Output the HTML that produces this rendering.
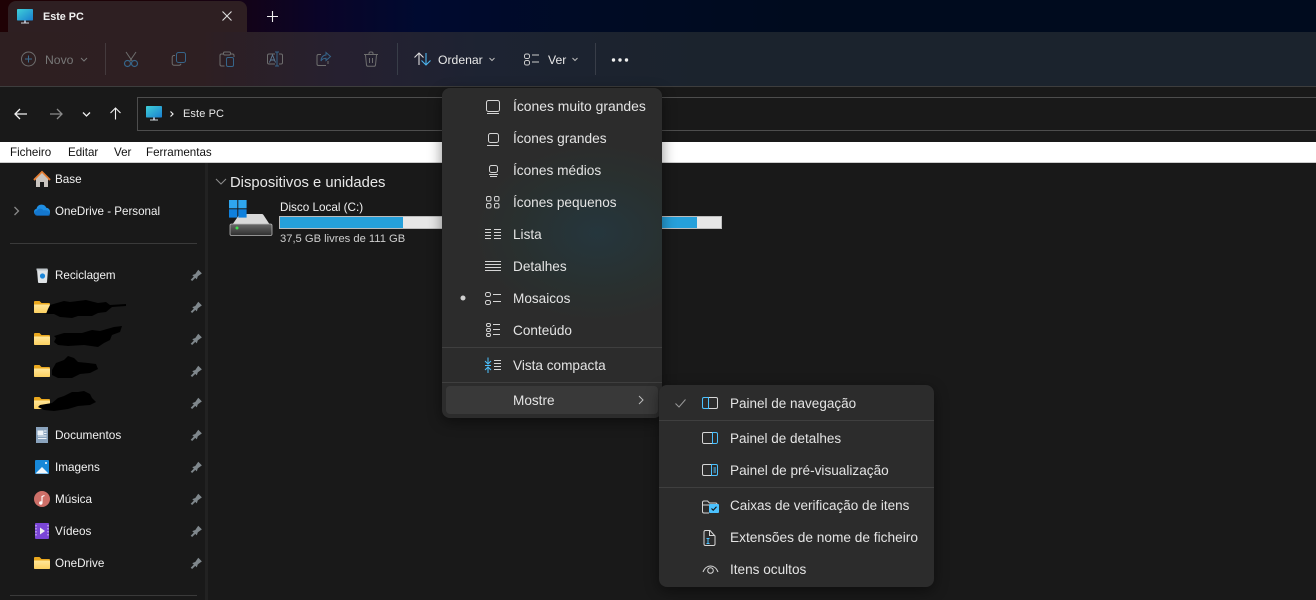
<!DOCTYPE html>
<html><head><meta charset="utf-8"><style>
html,body{margin:0;padding:0;background:#191919}
#r{position:relative;width:1316px;height:600px;overflow:hidden;background:#191919;font-family:"Liberation Sans",sans-serif;color:#f2f2f2}
.a{position:absolute}
.t{position:absolute;white-space:nowrap;line-height:16px;font-size:11.7px}
.m{position:absolute;white-space:nowrap;line-height:18px;font-size:13.6px;color:#e4e4e4}
svg{position:absolute;left:0;top:0}
</style></head><body><div id="r">
<div class="a" style="left:0;top:0;width:1316px;height:32px;background:linear-gradient(90deg,#1f0205 0,#1c0208 170px,#0a0428 320px,#000a30 420px,#000b24 600px,#000b1e 800px,#000b1e 100%)"></div>
<div class="a" style="left:0;top:32px;width:1316px;height:54px;background:linear-gradient(90deg,#2e1f21 0,#2e1f22 200px,#262030 340px,#1d2332 480px,#1b232d 700px,#1b232d 100%)"></div>
<div class="a" style="left:8px;top:1px;width:239px;height:31px;background:#2e1f22;border-radius:8px 8px 0 0"></div>
<div class="a" style="left:0;top:86px;width:1316px;height:1px;background:#3d3d3d"></div>
<div class="a" style="left:137px;top:97px;width:1180px;height:32px;border:1px solid #4d4d4d"></div>
<div class="a" style="left:0;top:142px;width:1316px;height:20px;background:#fff;border-bottom:1px solid #ccc"></div>
<div class="a" style="left:205px;top:163px;width:3px;height:437px;background:#222"></div>
<div class="a" style="left:10px;top:243px;width:187px;height:1px;background:#3a3a3a"></div>
<div class="a" style="left:10px;top:595px;width:187px;height:1px;background:#3a3a3a"></div>
<div class="a" style="left:105px;top:43px;width:1px;height:32px;background:#443a3d"></div>
<div class="a" style="left:397px;top:43px;width:1px;height:32px;background:#383d48"></div>
<div class="a" style="left:595px;top:43px;width:1px;height:32px;background:#383d48"></div>

<div class="t" style="left:43px;top:9px;font-weight:bold;font-size:10.8px;color:#f0f0f0">Este PC</div>
<div class="t" style="left:45px;top:52px;color:#777;font-size:12.2px">Novo</div>
<div class="t" style="left:438px;top:52px;font-size:12.2px;color:#e8e8e8">Ordenar</div>
<div class="t" style="left:548px;top:52px;font-size:12.2px;color:#e8e8e8">Ver</div>
<div class="t" style="left:183px;top:106px;color:#e8e8e8;font-size:11px;letter-spacing:.1px">Este PC</div>
<div class="t" style="left:10px;top:145px;color:#111;font-size:11.6px">Ficheiro</div>
<div class="t" style="left:68px;top:145px;color:#111;font-size:11.6px">Editar</div>
<div class="t" style="left:114px;top:145px;color:#111;font-size:11.6px">Ver</div>
<div class="t" style="left:146px;top:145px;color:#111;font-size:11.6px">Ferramentas</div>

<div class="t" style="left:55px;top:172px">Base</div>
<div class="t" style="left:55px;top:204px;font-size:11.6px">OneDrive - Personal</div>
<div class="t" style="left:55px;top:268px;font-size:11.6px">Reciclagem</div>
<div class="t" style="left:55px;top:427px;font-size:11.8px">Documentos</div>
<div class="t" style="left:55px;top:460px">Imagens</div>
<div class="t" style="left:55px;top:492px">Música</div>
<div class="t" style="left:55px;top:524px">Vídeos</div>
<div class="t" style="left:55px;top:556px">OneDrive</div>

<div class="t" style="left:230px;top:175px;font-size:14.8px;color:#e8e8e8">Dispositivos e unidades</div>
<div class="t" style="left:280px;top:200px;font-size:11.7px">Disco Local (C:)</div>
<div class="t" style="left:280px;top:231px;font-size:11.2px;color:#cfcfcf">37,5 GB livres de 111 GB</div>
<div class="a" style="left:279px;top:216px;width:441px;height:11px;border:1px solid #bcbcbc;background:#e6e6e6"></div>
<div class="a" style="left:280px;top:217px;width:123px;height:11px;background:#26a0da"></div>
<div class="a" style="left:640px;top:217px;width:57px;height:11px;background:#26a0da"></div>

<svg width="1316" height="600" fill="none">
<defs>
<linearGradient id="mon" x1="0" y1="0" x2="1" y2="1"><stop offset="0" stop-color="#3fd0d8"/><stop offset="1" stop-color="#1a7fd0"/></linearGradient>
<linearGradient id="fol" x1="0" y1="0" x2="0" y2="1"><stop offset="0" stop-color="#ffe69a"/><stop offset="1" stop-color="#fcd060"/></linearGradient>
<linearGradient id="drv" x1="0" y1="0" x2="0" y2="1"><stop offset="0" stop-color="#6a6a6a"/><stop offset="1" stop-color="#2e2e2e"/></linearGradient>
<g id="pin"><path transform="scale(1.2)" d="M1 9.800 3.600 7.200 2.300 5.900 4.800 5 7.300 1.500 10.300 4.500 6.900 7 6.100 9.500 4.800 8.200 2.200 10.800Z" fill="#7f878c"/></g>
<g id="folder"><path d="M0 2a1 1 0 0 1 1-1h4.500l2 2H15a1 1 0 0 1 1 1v8a1 1 0 0 1-1 1H1a1 1 0 0 1-1-1Z" fill="#eaa81e"/><path d="M0 4.500h15a1 1 0 0 1 1 1v6.500a1 1 0 0 1-1 1H1a1 1 0 0 1-1-1Z" fill="url(#fol)"/></g>
</defs>

<!-- tab icon -->
<rect x="17" y="9" width="16" height="11.500" rx=".8" fill="url(#mon)"/><rect x="24" y="20.500" width="2" height="2.500" fill="#aab"/><rect x="21" y="22.500" width="8" height="1" fill="#cfd6dc"/>
<path d="M222.500 11.500l9 9M231.500 11.500l-9 9" stroke="#ddd" stroke-width="1.100"/>
<path d="M272.500 11v11M267 16.500h11" stroke="#eee" stroke-width="1.100"/>

<!-- Novo -->
<circle cx="28.500" cy="59" r="7" stroke="#6e6e6e"/><path d="M28.500 55.500v7M25 59h7" stroke="#3d6d90"/>
<path d="M81 58l3 3 3-3" stroke="#777"/>
<!-- cut -->
<path d="M126 52l6.500 9.500M136 52l-6.500 9.500" stroke="#6e6e6e"/><circle cx="127.500" cy="63.500" r="3" stroke="#36658a" stroke-width="1.200"/><circle cx="134.500" cy="63.500" r="3" stroke="#36658a" stroke-width="1.200"/>
<!-- copy -->
<rect x="176.500" y="52.500" width="9" height="10" rx="2" stroke="#36658a"/><path d="M175 55.500h-1a1.800 1.800 0 0 0-1.800 1.800v6a2 2 0 0 0 2 2h5a2 2 0 0 0 1.800-1.500" stroke="#6e6e6e"/>
<!-- paste -->
<path d="M223 54h-1.500a1.500 1.500 0 0 0-1.500 1.500v9a1.500 1.500 0 0 0 1.500 1.500h3M231 54h1.500a1.500 1.500 0 0 1 1.500 1.500V57" stroke="#6e6e6e"/><rect x="223.500" y="52" width="7" height="3" rx="1.200" stroke="#6e6e6e"/><rect x="226.500" y="57.500" width="7" height="9" rx="1.500" stroke="#36658a"/>
<!-- rename -->
<path d="M275 54h-6a1.500 1.500 0 0 0-1.500 1.500v7a1.500 1.500 0 0 0 1.500 1.500h6M279 54h2a1.500 1.500 0 0 1 1.500 1.500v7a1.500 1.500 0 0 1-1.500 1.500h-2" stroke="#6e6e6e"/><path d="M277 52v14M275 52h4M275 66h4" stroke="#36658a"/><path d="M269.500 62.500l3-7.500 3 7.500M270.500 60h4" stroke="#5d7c94" stroke-width=".9"/>
<!-- share -->
<path d="M326 65.500h-7.500a1.500 1.500 0 0 1-1.500-1.500v-8a1.500 1.500 0 0 1 1.500-1.500H321M328 61v3" stroke="#6e6e6e"/><path d="M326 52.500l4.500 4-4.500 4v-2.300c-2.500 0-4 .8-5 2.800 0-3.500 2-5.800 5-6Z" stroke="#36658a"/>
<!-- delete -->
<path d="M364 54.500h14M369 54.500v-1a1.500 1.500 0 0 1 1.500-1.500h1a1.500 1.500 0 0 1 1.500 1.500v1M365.500 55l1 10a1.500 1.500 0 0 0 1.500 1.300h6a1.500 1.500 0 0 0 1.500-1.300l1-10M369.500 58v5M372.500 58v5" stroke="#6e6e6e"/>
<!-- sort -->
<path d="M419 65V53M414.500 57.500 419 53l4.500 4.500" stroke="#dcdcdc" stroke-width="1.100"/><path d="M426 53v12M421.500 60.500 426 65l4.500-4.500" stroke="#4cb4ee" stroke-width="1.100"/>
<path d="M489.500 58l2.500 2.500 2.500-2.500" stroke="#bbb"/>
<!-- ver -->
<rect x="524.500" y="54" width="5" height="4.500" rx="1.800" stroke="#ccc"/><rect x="524.500" y="60.500" width="5" height="4.500" rx="1.800" stroke="#ccc"/><path d="M532 55h7M532 62h7" stroke="#ccc" stroke-width="1.100"/>
<path d="M572.500 58l2.500 2.500 2.500-2.500" stroke="#bbb"/>
<circle cx="613.500" cy="60" r="1.700" fill="#eee"/><circle cx="620" cy="60" r="1.700" fill="#eee"/><circle cx="626.500" cy="60" r="1.700" fill="#eee"/>

<!-- nav -->
<path d="M15 114h12M20 109l-5 5 5 5" stroke="#f0f0f0" stroke-width="1.300"/>
<path d="M50 114h12M57 109l5 5-5 5" stroke="#8a8a8a" stroke-width="1.300"/>
<path d="M83 112.500l3.500 3.500 3.500-3.500" stroke="#eee" stroke-width="1.300"/>
<path d="M115.500 119.500V108M110.500 113l5-5 5 5" stroke="#f0f0f0" stroke-width="1.100"/>
<rect x="146" y="106" width="16" height="11.500" rx=".8" fill="url(#mon)"/><rect x="153" y="117.500" width="2" height="2.500" fill="#aab"/><rect x="150" y="119.500" width="8" height="1" fill="#cfd6dc"/>
<path d="M170.500 111.500l2.500 2.500-2.500 2.500" stroke="#eee" stroke-width="1.200"/>

<!-- sidebar icons -->
<path d="M34 180l8-8 8 8" stroke="#e57d32" stroke-width="2"/><path d="M36 179l6-6 6 6v8H44v-5h-4v5h-4Z" fill="#c9c4bf"/>
<path d="M14.500 207l4 4-4 4" stroke="#888" stroke-width="1.300"/>
<path d="M37 215a3.200 3.200 0 0 1-.5-6.300 5.200 5.200 0 0 1 9.800-1 4 4 0 0 1 3.700 4.500 2.800 2.800 0 0 1-2 2.800Z" fill="#1f8fe4"/><path d="M37 216a2.800 2.800 0 0 1 0-5.500c1.500-2.500 5-2.500 6.500 0 3-.8 6.500.8 6.500 3.500a2 2 0 0 1-2 2Z" fill="#0f6cc4" opacity=".7"/>
<path d="M37 269.500h11l-1 12.500a1 1 0 0 1-1 1h-7a1 1 0 0 1-1-1Z" fill="#dfe3e6"/><rect x="36.500" y="268.500" width="11" height="2" fill="#bfc5c9"/><circle cx="42.500" cy="276" r="2.600" fill="#1c86d8"/>
<use href="#folder" x="34" y="300"/><use href="#folder" x="34" y="332"/><use href="#folder" x="34" y="364"/><use href="#folder" x="34" y="396"/><use href="#folder" x="34" y="556"/>
<path d="M36 427h12v16H36Z" fill="#8aa3bd"/><path d="M38 431h5v3.500h-5ZM44 431h2.500M44 433.500h2.500M38 436h8.500M38 438.500h8.500" stroke="#eef3f8" fill="#eef3f8" stroke-width=".9"/>
<rect x="35" y="460" width="14" height="14" rx="1" fill="#1788d9"/><path d="M35.500 473.500l6.500-6.500 6.500 6.500Z" fill="#f4f8fc"/><circle cx="46" cy="463" r="1" fill="#fff"/>
<circle cx="42" cy="499" r="8" fill="#cd6f68"/><path d="M42 503v-6.500l2.500-1" stroke="#fff" stroke-width="1.100"/><circle cx="40.800" cy="503" r="1.700" fill="#fff"/>
<rect x="35" y="523" width="14" height="16" rx="1" fill="#7a45d6"/><path d="M40 527.500l5 3.500-5 3.500Z" fill="#eee"/><path d="M36 525v12M48 525v12" stroke="#c9b2f0" stroke-width="1.300" stroke-dasharray="1.500 1.500"/>

<use href="#pin" x="189.500" y="268"/><use href="#pin" x="189.500" y="300"/><use href="#pin" x="189.500" y="332"/><use href="#pin" x="189.500" y="364"/><use href="#pin" x="189.500" y="396"/><use href="#pin" x="189.500" y="428"/><use href="#pin" x="189.500" y="460"/><use href="#pin" x="189.500" y="492"/><use href="#pin" x="189.500" y="524"/><use href="#pin" x="189.500" y="556"/>

<!-- scribbles -->
<path d="M50 305l14-4 6 1 16-2 12 3 8-1 4 3 16-1v2l-14 1-6 5-8 1-6 3-14 0-6 2-12-1-6-3-8 0 2-5Z" fill="#000"/>
<path d="M54 336l10-3 18 0 10-3 8 1 14-4 8-1-2 6-8 3-2 5-6 3-6 4-14-2-16 1-10-1-4-3 2-4Z" fill="#000"/>
<path d="M52 370l4-7 8-3 4-4 6 2 4 4 10 1 8 1 2 5-8 4-10 1-8 4-14 0-6-3Z" fill="#000"/>
<path d="M40 405l12-2 6-5 6-2 8-4 6 0 6-1 6 3 2 4 4 4-6 3-12 1-10 3-14 2-10-1-6-3Z" fill="#000"/>

<!-- section chevron -->
<path d="M216 179l5 5 5-5" stroke="#8c8c8c" stroke-width="1.100"/>
<!-- drive -->
<path d="M230 228l9-13a2 2 0 0 1 1.500-1H262a2 2 0 0 1 1.500 1l8.500 13Z" fill="#d9d9d9"/>
<rect x="230" y="224" width="42" height="11.500" rx="1.500" fill="url(#drv)" stroke="#b5b5b5" stroke-width=".8"/>
<circle cx="237" cy="228" r="1.500" fill="#3fe04c"/>
<rect x="229" y="200" width="8.300" height="8.300" fill="#2fa6ee"/><rect x="238.300" y="200" width="8.300" height="8.300" fill="#2fa6ee"/><rect x="229" y="209.300" width="8.300" height="8.300" fill="#0f80dc"/><rect x="238.300" y="209.300" width="8.300" height="8.300" fill="#0f80dc"/>
</svg>

<!-- main menu -->
<div class="a" style="left:442px;top:88px;width:220px;height:330px;border-radius:8px;background:radial-gradient(ellipse 125px 90px at 155px 145px,#25363d 0,#29302f 65%,#2c2c2c 100%);box-shadow:0 4px 14px rgba(0,0,0,.45)"></div>
<div class="a" style="left:442px;top:347px;width:220px;height:1px;background:#3f3f3f"></div>
<div class="a" style="left:442px;top:382px;width:220px;height:1px;background:#3f3f3f"></div>
<div class="a" style="left:446px;top:386px;width:212px;height:28px;border-radius:4px;background:#393939"></div>
<div class="m" style="left:513px;top:97px;font-size:13.9px">Ícones muito grandes</div>
<div class="m" style="left:513px;top:130px;font-size:13.7px">Ícones grandes</div>
<div class="m" style="left:513px;top:162px;font-size:13.7px">Ícones médios</div>
<div class="m" style="left:513px;top:194px">Ícones pequenos</div>
<div class="m" style="left:513px;top:226px">Lista</div>
<div class="m" style="left:513px;top:258px">Detalhes</div>
<div class="m" style="left:513px;top:290px">Mosaicos</div>
<div class="m" style="left:513px;top:322px">Conteúdo</div>
<div class="m" style="left:513px;top:357px">Vista compacta</div>
<div class="m" style="left:513px;top:392px">Mostre</div>

<!-- submenu -->
<div class="a" style="left:659px;top:385px;width:275px;height:202px;border-radius:8px;background:#2c2c2c;box-shadow:0 4px 14px rgba(0,0,0,.45)"></div>
<div class="a" style="left:659px;top:420px;width:275px;height:1px;background:#3f3f3f"></div>
<div class="a" style="left:659px;top:487px;width:275px;height:1px;background:#3f3f3f"></div>
<div class="m" style="left:730px;top:395px;font-size:13.5px">Painel de navegação</div>
<div class="m" style="left:730px;top:430px;font-size:13.5px">Painel de detalhes</div>
<div class="m" style="left:730px;top:462px">Painel de pré-visualização</div>
<div class="m" style="left:730px;top:497px;font-size:13.5px">Caixas de verificação de itens</div>
<div class="m" style="left:730px;top:529px;font-size:13.7px">Extensões de nome de ficheiro</div>
<div class="m" style="left:730px;top:561px">Itens ocultos</div>

<svg width="1316" height="600" fill="none" stroke="#d6d6d6">
<!-- menu icons -->
<rect x="486.500" y="100.500" width="13" height="11" rx="2"/><path d="M487 113.500h12"/>
<rect x="488.500" y="133.500" width="10" height="9" rx="2"/><path d="M487 145.500h12"/>
<rect x="489.500" y="165.500" width="8" height="7" rx="2"/><path d="M489 174.500h9M490 176.500h7"/>
<rect x="486.500" y="196.500" width="4.500" height="4.500" rx="1.500"/><rect x="494.500" y="196.500" width="4.500" height="4.500" rx="1.500"/><rect x="486.500" y="203.500" width="4.500" height="4.500" rx="1.500"/><rect x="494.500" y="203.500" width="4.500" height="4.500" rx="1.500"/>
<path d="M485 229.500h6M485 232.500h6M485 235.500h6M485 238.500h6M494 229.500h7M494 232.500h7M494 235.500h7M494 238.500h7"/>
<path d="M485 261.500h16M485 264.500h16M485 267.500h16M485 270.500h16"/>
<circle cx="463" cy="298" r="2.500" fill="#d0d0d0" stroke="none"/>
<rect x="485.500" y="292.500" width="5" height="4" rx="1.800"/><rect x="485.500" y="300.500" width="5" height="4" rx="1.800"/><path d="M493 294.500h8M493 301.500h8"/>
<rect x="486.500" y="323.500" width="4" height="3" rx="1.400"/><rect x="486.500" y="328.500" width="4" height="3" rx="1.400"/><rect x="486.500" y="333.500" width="4" height="3" rx="1.400"/><path d="M493 324.500h7M493 329.500h7M493 334.500h7"/>
<path d="M488 357.500v6M485 361l3 3 3-3M485 365.500h6M488 373v-6M485 370l3-3 3 3" stroke="#4cc2ff"/><path d="M494 360.500h7M494 363.500h7M494 366.500h7M494 369.500h7"/>
<path d="M639 396l4 4-4 4" stroke="#bbb"/>
<!-- sub icons -->
<path d="M675.500 403.500l3.500 3.500 6.500-7.500" stroke="#999"/>
<path d="M708 397.500h8a1.500 1.500 0 0 1 1.500 1.500v8a1.500 1.500 0 0 1-1.500 1.500h-8"/><path d="M708.500 397.500h-4.500a1.500 1.500 0 0 0-1.500 1.500v8a1.500 1.500 0 0 0 1.500 1.500h4.500Z" stroke="#4cc2ff"/>
<path d="M712 432.500h-8a1.500 1.500 0 0 0-1.500 1.500v8a1.500 1.500 0 0 0 1.500 1.500h8"/><path d="M712.500 432.500h3.500a1.500 1.500 0 0 1 1.500 1.500v8a1.500 1.500 0 0 1-1.500 1.500h-3.500Z" stroke="#4cc2ff"/>
<path d="M711 464.500h-7a1.500 1.500 0 0 0-1.500 1.500v8a1.500 1.500 0 0 0 1.500 1.500h7"/><path d="M711.500 464.500h4.500a1.500 1.500 0 0 1 1.500 1.500v8a1.500 1.500 0 0 1-1.500 1.500h-4.500ZM713.500 468h2.500M713.500 470h2.500M713.500 472h2.500" stroke="#4cc2ff"/>
<path d="M709 513h-5a1.500 1.500 0 0 1-1.500-1.500v-9a1.500 1.500 0 0 1 1.500-1.500h3.500l2 2h6a1.500 1.500 0 0 1 1.500 1.500V505M702.500 505h7"/>
<rect x="709" y="504" width="10" height="9" rx="1" fill="#4cc2ff" stroke="none"/><path d="M711.500 508.500l1.700 1.700 3.300-3.400" stroke="#111" stroke-width="1.100"/>
<path d="M709 530.500h-3.500a1.500 1.500 0 0 0-1.500 1.500v12a1.500 1.500 0 0 0 1.500 1.500h8a1.500 1.500 0 0 0 1.500-1.500v-8l-5-5.500ZM709.500 531v4.500h5"/><path d="M708 538.500v5M706.500 538.500h3M706.500 543.500h3" stroke="#4cc2ff"/>
<path d="M703 572c1.500-4 4.500-6 7.500-6s6 2 7.500 6"/><circle cx="710.500" cy="570.500" r="2.800"/>
</svg>
</div></body></html>
